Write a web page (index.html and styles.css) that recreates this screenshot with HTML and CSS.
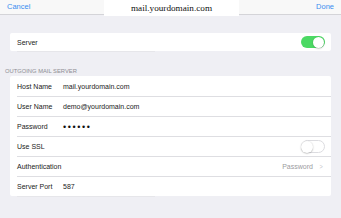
FILE: index.html
```html
<!DOCTYPE html>
<html>
<head>
<meta charset="utf-8">
<link rel="stylesheet" href="styles.css">
</head>
<body>
<div class="navbar">
  <div class="nav-left">Cancel</div>
  <div class="nav-title">mail.yourdomain.com</div>
  <div class="nav-right">Done</div>
</div>
<div class="card server-card">
  <div class="row">
    <span class="label">Server</span>
    <span class="toggle on"><span class="knob"></span></span>
  </div>
</div>
<div class="tail-line"></div>
<div class="section-header">OUTGOING MAIL SERVER</div>
<div class="card">
  <div class="row"><span class="label fixed">Host Name</span><span class="value">mail.yourdomain.com</span></div>
  <div class="row sep"><span class="label fixed">User Name</span><span class="value">demo@yourdomain.com</span></div>
  <div class="row sep"><span class="label fixed">Password</span><span class="value dots">••••••</span></div>
  <div class="row sep"><span class="label">Use SSL</span><span class="toggle off"><span class="knob"></span></span></div>
  <div class="row sep"><span class="label">Authentication</span><span class="detail">Password<span class="chev">&gt;</span></span></div>
  <div class="row sep"><span class="label fixed">Server Port</span><span class="value">587</span></div>
</div>
<div class="tail-line"></div>
</body>
</html>
```
FILE: styles.css
```css
html, body {
  margin: 0;
  padding: 0;
}
body {
  width: 341px;
  height: 218px;
  background: #efeff4;
  font-family: "Liberation Sans", Arial, sans-serif;
  font-size: 7px;
  color: #222;
  overflow: hidden;
}
.navbar {
  display: grid;
  grid-template-columns: 104px 135px 1fr;
  height: 14px;
  background: #f8f8f8;
  border-bottom: 1px solid #d4d4d8;
}
.nav-left, .nav-right {
  color: #3a8ef0;
  font-size: 7.5px;
  line-height: 13px;
}
.nav-left {
  padding-left: 7px;
}
.nav-right {
  text-align: right;
  padding-right: 7px;
}
.nav-title {
  background: #fff;
  font-family: "Liberation Serif", "Times New Roman", serif;
  font-size: 9.2px;
  line-height: 16px;
  text-align: center;
  color: #111;
}
.card {
  background: #fff;
  margin: 0 10px;
  border-radius: 2px;
}
.server-card {
  margin-top: 18px;
}
.server-card .row {
  height: 18px;
}
.row {
  display: flex;
  align-items: center;
  height: 20px;
  padding: 0 6px 0 7px;
  box-sizing: border-box;
}
.row.sep {
  border-top: 1px solid #dedee2;
  margin-left: 7px;
  padding-left: 0;
}
.label {
  flex: 1;
}
.label.fixed {
  flex: 0 0 46px;
}
.value {
  flex: 1;
}
.dots {
  font-size: 9px;
  letter-spacing: 1.6px;
  color: #111;
}
.tail-line {
  height: 1px;
  width: 138px;
  margin-left: 17px;
  background: #e6e6ea;
}
.section-header {
  padding: 16px 0 1px 5px;
  font-size: 5.8px;
  line-height: 7px;
  color: #8e8e93;
}
.toggle {
  width: 24px;
  height: 12px;
  border-radius: 7px;
  box-sizing: border-box;
  display: flex;
  align-items: center;
}
.toggle.on {
  background: #4cd964;
  justify-content: flex-end;
  padding: 1px;
}
.toggle.off {
  height: 13px;
  border: 1px solid #dcdce0;
  background: #fff;
  justify-content: flex-start;
}
.knob {
  width: 11px;
  height: 11px;
  border-radius: 50%;
  background: #fff;
  box-shadow: 0 0.5px 1.5px rgba(0,0,0,0.35);
}
.toggle.off .knob {
  width: 12px;
  height: 12px;
  margin-left: -1px;
}
.detail {
  color: #9b9ba0;
  display: flex;
  align-items: center;
  padding-right: 2px;
}
.chev {
  color: #c4c4c9;
  margin-left: 6px;
  font-size: 7px;
  transform: scaleX(0.8);
}
```
